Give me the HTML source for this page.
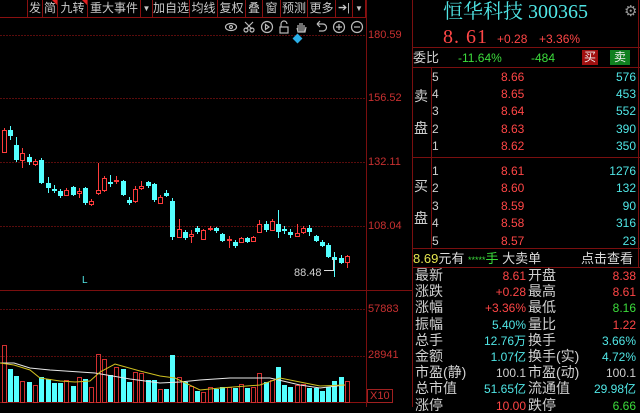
<!DOCTYPE html>
<html><head><meta charset="utf-8"><style>
*{margin:0;padding:0;box-sizing:border-box}
body{width:640px;height:407px;background:#000;overflow:hidden;position:relative;font-family:"Liberation Sans","Noto Sans CJK SC",sans-serif;color:#c0c0c0}
.a{position:absolute;white-space:nowrap;line-height:1}
.tb{position:absolute;top:0;height:18px;border-right:1px solid #8a1010;border-bottom:1px solid #8a1010;font-size:12px;line-height:17px;text-align:center;color:#c8c8c8}
.tb.m:after{content:"";position:absolute;right:0;top:0;border-top:5px solid #e02020;border-left:5px solid transparent}
.ax{position:absolute;left:368px;font-size:11px;color:#c83030;line-height:1}
.hl{position:absolute;height:1px;background:#7a0f0f}
.vl{position:absolute;width:1px;background:#7a0f0f}
.r{color:#ff4646}.g{color:#3cdc3c}.c{color:#50e6e6}.w{color:#d0d0d0}.y{color:#e6e650}
.f{font-size:12px}
</style></head><body>
<svg id="ch" width="366" height="407" style="position:absolute;left:0;top:0"></svg>

<div class="tb" style="left:27px;width:16px;border-left:1px solid #8a1010">发</div>
<div class="tb m" style="left:43px;width:15px">简</div>
<div class="tb m" style="left:58px;width:30px">九转</div>
<div class="tb" style="left:88px;width:53px">重大事件</div>
<div class="tb" style="left:141px;width:12px;font-size:8px">▼</div>
<div class="tb" style="left:153px;width:37px">加自选</div>
<div class="tb" style="left:190px;width:28px">均线</div>
<div class="tb" style="left:218px;width:28px">复权</div>
<div class="tb" style="left:246px;width:17px">叠</div>
<div class="tb" style="left:263px;width:18px">窗</div>
<div class="tb" style="left:281px;width:27px">预测</div>
<div class="tb" style="left:308px;width:28px">更多</div>
<div class="tb" style="left:336px;width:17px;font-size:11px">➔|</div>
<div class="tb" style="left:353px;width:13px;font-size:8px">▼</div>

<svg width="140" height="14" style="position:absolute;left:224px;top:20px" fill="none" stroke="#bbb" stroke-width="1.2">
<ellipse cx="7" cy="7" rx="5.5" ry="3.5"/><circle cx="7" cy="7" r="1.5"/>
<circle cx="22" cy="10" r="2"/><circle cx="28" cy="10" r="2"/><path d="M21 2L28 9M29 2L22 9"/>
<circle cx="43" cy="7" r="5.5"/><path d="M41.5 4.5L45 7L41.5 9.5Z"/>
<path d="M57 7V4a3 3 0 0 1 6 0"/><rect x="56" y="7" width="8" height="6"/>
<path d="M74 12V5M76 12V3M78 12V3M80 12V5M73 8l1 4h7l1-5"/>
<path d="M93 4h6a3 3 0 0 1 0 7h-4M93 4l3-3M93 4l3 3"/>
<circle cx="115" cy="7" r="5.5"/><path d="M112 7h6M115 4v6"/>
<circle cx="133" cy="7" r="5.5"/><path d="M130 7h6"/>
</svg>
<div class="a" style="left:294px;top:35px;width:7px;height:7px;background:#2ab0e8;transform:rotate(45deg)"></div>

<div class="ax" style="top:30px">180.59</div>
<div class="ax" style="top:93px">156.52</div>
<div class="ax" style="top:157px">132.11</div>
<div class="ax" style="top:221px">108.04</div>
<div class="ax" style="top:304px">57883</div>
<div class="ax" style="top:350px">28941</div>
<div class="ax" style="top:389px;left:367px;border:1px solid #a02020;padding:1px 2px 0">X10</div>
<div class="a w" style="left:294px;top:268px;font-size:11px">88.48</div>
<div class="a c" style="left:82px;top:276px;font-size:10px">L</div>

<div class="vl" style="left:366px;top:0;height:407px"></div>
<div class="vl" style="left:412px;top:0;height:407px"></div>
<div class="hl" style="left:0;top:290px;width:412px"></div>

<div class="a c" style="left:443px;top:2px;font-size:20px;font-family:'Liberation Serif','Noto Serif CJK SC',serif">恒华科技 300365</div>
<div class="a" style="left:624px;top:4px;font-size:15px;color:#999">⚙</div>
<div class="a r" style="left:443px;top:27px;font-size:20px;font-family:'Liberation Serif',serif;letter-spacing:1px">8. 61</div>
<div class="a r" style="left:497px;top:33px;font-size:12px">+0.28</div>
<div class="a r" style="left:539px;top:33px;font-size:12px">+3.36%</div>
<div class="hl" style="left:412px;top:47px;width:228px"></div>
<div class="a w" style="left:413px;top:51px;font-size:13px">委比</div>
<div class="a g f" style="left:458px;top:52px">-11.64%</div>
<div class="a g f" style="left:531px;top:52px">-484</div>
<div class="a" style="left:582px;top:50px;width:16px;height:15px;background:#a01010;color:#eee;font-size:12px;text-align:center;line-height:15px">买</div>
<div class="a" style="left:610px;top:50px;width:20px;height:15px;background:#108020;color:#eee;font-size:12px;text-align:center;line-height:15px">卖</div>
<div class="hl" style="left:412px;top:67px;width:228px"></div>
<div class="vl" style="left:431px;top:67px;height:181px"></div>
<div class="vl" style="left:638px;top:0;height:268px"></div>
<div class="hl" style="left:412px;top:157px;width:228px"></div>
<div class="hl" style="left:412px;top:248px;width:228px"></div>
<div class="hl" style="left:412px;top:267px;width:228px"></div>
<div class="a w" style="left:414px;top:89px;font-size:14px">卖</div>
<div class="a w" style="left:414px;top:121px;font-size:14px">盘</div>
<div class="a w" style="left:414px;top:179px;font-size:14px">买</div>
<div class="a w" style="left:414px;top:211px;font-size:14px">盘</div>
<div id="book"></div>

<div class="a y" style="left:413px;top:252px;font-size:13px">8.69<span style="color:#ddd">元有</span> <span class="g" style="font-size:9px">*****</span><span class="g">手</span> <span style="color:#ddd">大卖单</span></div>
<div class="a" style="left:581px;top:252px;font-size:13px;color:#ddd">点击查看</div>
<div id="st"></div>

<script>
var S='http://www.w3.org/2000/svg',svg=document.getElementById('ch');
function el(n,a){var e=document.createElementNS(S,n);for(var k in a)e.setAttribute(k,a[k]);svg.appendChild(e);return e}
[35,98,162,226,309,356].forEach(function(g){el('line',{x1:0,x2:366,y1:g+.5,y2:g+.5,stroke:'#5a0c0c','stroke-dasharray':'2,1'})});
el('line',{x1:0,x2:366,y1:17.5,y2:17.5,stroke:'#8a1010'});
el('line',{x1:0,x2:366,y1:402.5,y2:402.5,stroke:'#8a1010'});
var C=[[4,130,152,128,153,1],[10,130,136,126,140,0],[16,145,160,137,162,0],[22,153,160,148,168,1],[29,157,162,154,165,0],[35,161,164,159,166,1],[41,160,183,158,184,0],[48,183,188,177,193,0],[54,189,191,185,193,0],[60,191,196,189,198,0],[66,190,195,188,196,1],[73,187,195,186,196,0],[79,191,193,188,198,1],[85,188,203,187,205,0],[91,201,204,199,206,1],[98,190,193,163,195,1],[104,178,190,176,192,1],[110,182,184,175,187,0],[116,180,181,176,184,1],[123,181,195,180,196,0],[129,200,203,197,205,0],[135,189,201,186,203,1],[141,186,188,181,190,1],[148,182,186,181,188,0],[154,184,200,183,202,0],[160,197,203,195,204,1],[166,193,196,190,197,0],[172,201,237,198,240,0],[179,229,237,219,238,1],[185,232,238,230,240,0],[191,234,236,230,243,1],[197,228,232,226,234,0],[203,230,239,229,240,1],[210,228,229,226,231,1],[216,228,231,227,233,0],[222,234,241,233,242,0],[229,239,240,236,248,1],[235,242,246,240,248,0],[241,238,242,237,243,1],[247,238,242,237,243,0],[253,237,241,236,242,1],[259,224,232,220,233,1],[266,224,230,221,232,0],[272,221,230,219,231,1],[278,224,232,210,238,0],[284,229,231,226,234,0],[290,232,235,229,238,0],[297,233,236,224,237,1],[303,228,232,226,234,1],[309,228,232,225,236,0],[316,236,241,235,242,0],[322,242,246,240,247,0],[328,245,257,243,258,0],[334,257,260,252,277,0],[341,258,263,255,264,0],[347,256,262,255,268,1]];
var V=[345,369,376,381,382,385,377,379,383,383,380,386,377,379,387,354,359,375,367,369,382,372,373,380,380,389,389,355,377,382,386,391,392,387,389,387,387,388,384,388,387,373,382,380,367,385,387,385,384,388,388,391,387,381,377,381];
C.forEach(function(c,i){var col=c[5]?'#ff3c3c':'#54ffff';
el('line',{x1:c[0]+.5,x2:c[0]+.5,y1:c[3],y2:c[4],stroke:col});
if(c[5])el('rect',{x:c[0]-1.5,y:c[1]+.5,width:4,height:Math.max(c[2]-c[1],1),fill:'#000',stroke:col});
else el('rect',{x:c[0]-2,y:c[1],width:5,height:Math.max(c[2]-c[1],1.5),fill:col});
var v=V[i];
if(c[5])el('rect',{x:c[0]-1.5,y:v+.5,width:4,height:402-v,fill:'none',stroke:'#d03030'});
else el('rect',{x:c[0]-2,y:v,width:5,height:402-v,fill:'#54ffff'});
});
el('polyline',{points:'0,363 14,363 30,368 50,370 80,372 95,373 130,379 160,383 180,382 200,380 230,378 270,378 300,385 320,388 345,385',fill:'none',stroke:'#e8e8e8','stroke-width':1});
el('polyline',{points:'0,363 14,365 30,370 40,378 60,381 75,382 90,381 100,372 115,364 122,366 140,371 160,376 175,378 200,390 220,388 260,385 280,378 300,382 320,386 345,385',fill:'none',stroke:'#d0c020','stroke-width':1});
el('line',{x1:324,x2:333,y1:270.5,y2:270.5,stroke:'#ddd'});el('line',{x1:333.5,x2:333.5,y1:258,y2:271,stroke:'#ddd'});
var b=document.getElementById('book'),h='';
var sell=[['5','8.66','576'],['4','8.65','453'],['3','8.64','552'],['2','8.63','390'],['1','8.62','350']],buy=[['1','8.61','1276'],['2','8.60','132'],['3','8.59','90'],['4','8.58','316'],['5','8.57','23']];
function row(r,y){return '<div class="a w f" style="left:432px;top:'+y+'px">'+r[0]+'</div><div class="a r f" style="left:501px;top:'+y+'px">'+r[1]+'</div><div class="a c f" style="right:4px;top:'+y+'px">'+r[2]+'</div>'}
sell.forEach(function(r,i){h+=row(r,71+i*17.2)});buy.forEach(function(r,i){h+=row(r,165+i*17.4)});b.innerHTML=h;
var st=[['最新','8.61','r','开盘','8.38','r'],['涨跌','+0.28','r','最高','8.61','r'],['涨幅','+3.36%','r','最低','8.16','g'],['振幅','5.40%','c','量比','1.22','r'],['总手','12.76万','c','换手','3.66%','c'],['金额','1.07亿','c','换手(实)','4.72%','c'],['市盈(静)','100.1','w','市盈(动)','100.1','w'],['总市值','51.65亿','c','流通值','29.98亿','c'],['涨停','10.00','r','跌停','6.66','g']];
h='';st.forEach(function(s,i){var y=268+i*16.2;
h+='<div class="a w" style="left:415px;top:'+y+'px;font-size:14px">'+s[0]+'</div><div class="a '+s[2]+' f" style="right:114px;top:'+(y+2)+'px">'+s[1]+'</div><div class="a w" style="left:528px;top:'+y+'px;font-size:14px">'+s[3]+'</div><div class="a '+s[5]+' f" style="right:4px;top:'+(y+2)+'px">'+s[4]+'</div>';});
document.getElementById('st').innerHTML=h;
</script>
</body></html>
